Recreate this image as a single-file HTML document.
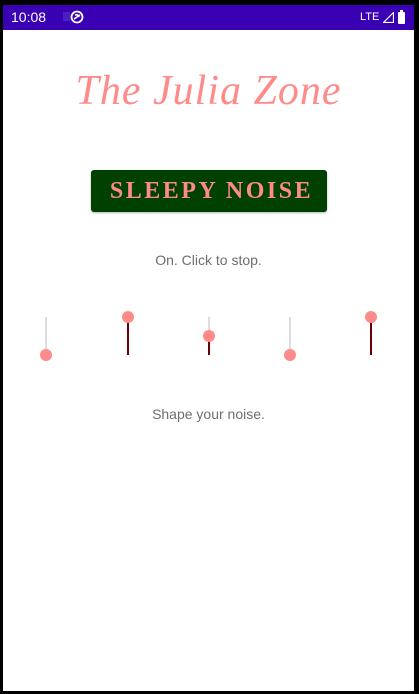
<!DOCTYPE html>
<html><head><style>
html,body{margin:0;padding:0;width:419px;height:694px;background:#000;overflow:hidden;font-family:"Liberation Sans",sans-serif}
#scr{position:absolute;left:3px;top:5px;width:411px;height:686px;background:#fff;overflow:hidden}
#sb{position:absolute;left:0;top:0;width:411px;height:25px;background:#3a00b3;color:#fff}
.t{position:absolute;left:0;width:100%;text-align:center}
.trk{position:absolute;width:2px;background:#ddd;top:312px;height:38px}
.act{position:absolute;width:2px;background:#6b0000}
.th{position:absolute;width:12px;height:12px;border-radius:50%;background:#ff8a8a}
</style></head><body>
<div id="scr">
<div id="sb">
<div style="position:absolute;left:8px;top:4px;font-size:14px">10:08</div>
<div style="position:absolute;left:60px;top:7px;width:7px;height:9px;background:#4a20c0"></div>
<svg style="position:absolute;left:67px;top:5px" width="14" height="14" viewBox="0 0 14 14"><circle cx="7" cy="7" r="5.5" fill="none" stroke="#fff" stroke-width="1.8"/><path d="M4 9 L10 5 M5 5 Q8 4 9 7" stroke="#fff" stroke-width="1.6" fill="none"/></svg>
<div style="position:absolute;left:357px;top:6px;font-size:11px">LTE</div>
<svg style="position:absolute;left:380px;top:7px" width="11" height="11"><path d="M0.5 10.5 L10.5 0.5 L10.5 10.5 Z" fill="none" stroke="#fff" stroke-width="1.2"/></svg>
<div style="position:absolute;left:395px;top:7px;width:7px;height:12px;background:#fff;border-radius:1px"></div>
<div style="position:absolute;left:397px;top:5px;width:3px;height:2px;background:#fff"></div>
</div>
<div class="t" style="top:62px;font-family:'Liberation Serif',serif;font-style:italic;font-size:42px;color:#ff8a8a;letter-spacing:1px">The Julia Zone</div>
<div style="position:absolute;left:88px;top:165px;width:236px;height:42px;background:#004000;border-radius:3px;box-shadow:0 1px 2px rgba(0,0,0,.3)"></div>
<div class="t" style="top:173px;font-family:'Liberation Serif',serif;font-weight:bold;font-size:24px;letter-spacing:2.5px;color:#ff8a8a;left:3px">SLEEPY NOISE</div>
<div class="t" style="top:247px;font-size:14px;color:#6e6e6e">On. Click to stop.</div>
<div class="trk" style="left:42px"></div><div class="th" style="left:37px;top:344px"></div>
<div class="trk" style="left:124px"></div><div class="act" style="left:124px;top:312px;height:38px"></div><div class="th" style="left:119px;top:306px"></div>
<div class="trk" style="left:205px"></div><div class="act" style="left:205px;top:331px;height:19px"></div><div class="th" style="left:200px;top:325px"></div>
<div class="trk" style="left:286px"></div><div class="th" style="left:281px;top:344px"></div>
<div class="trk" style="left:367px"></div><div class="act" style="left:367px;top:312px;height:38px"></div><div class="th" style="left:362px;top:306px"></div>
<div class="t" style="top:401px;font-size:14px;color:#6e6e6e">Shape your noise.</div>
</div>
</body></html>
